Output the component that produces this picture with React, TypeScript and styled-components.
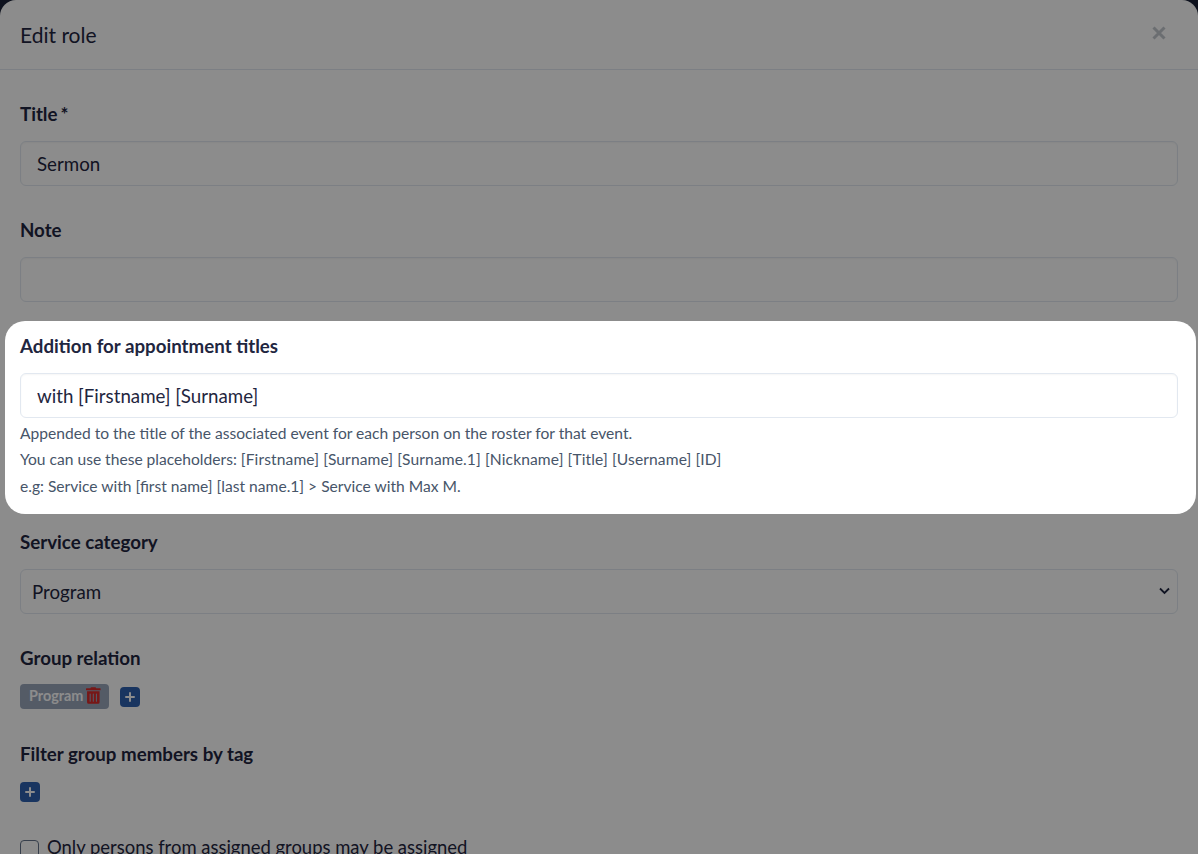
import React from "react";
import styled, { createGlobalStyle } from "styled-components";
import { FaTrashAlt } from "react-icons/fa";

const Global = createGlobalStyle`
  html, body { margin: 0; padding: 0; height: 854px; overflow: hidden; background: #1a2238; }
  body { font-family: Lato, "Liberation Sans", sans-serif; color: #1f2640; }
  * { box-sizing: border-box; }
`;

const Page = styled.div`
  position: relative;
  height: 854px;
  overflow: hidden;
  background: #1a2238;
`;

const Modal = styled.div`
  width: 1198px;
  height: 854px;
  background: #fff;
  border-radius: 16px 16px 0 0;
`;

const Header = styled.header`
  height: 70px;
  padding: 0 20px;
  display: flex;
  align-items: center;
  justify-content: space-between;
  border-bottom: 1px solid #e2e8f0;
`;

const Heading = styled.h2`
  margin: 0;
  font-size: 21px;
  font-weight: 400;
  line-height: 30px;
  color: #1f2640;
`;

const Close = styled.button`
  width: 16px;
  height: 16px;
  padding: 0;
  margin: -4px 11px 0 0;
  border: 0;
  background: none;
  color: #c4c8ce;
  display: flex;
`;

const Body = styled.div`
  padding: 31px 20px 0;
`;

const Field = styled.div`
  margin-bottom: 31px;
`;

const WideField = styled(Field)`
  margin-bottom: 32px;
`;

const Spotlight = styled.div`
  position: relative;
  z-index: 2;
  width: 1191px;
  margin: -12px -18px 15px -15px;
  padding: 12px 18px 14.8px 15px;
  background: #fff;
  border-radius: 20px;
  box-shadow: 0 0 0 2000px rgba(0, 0, 0, 0.45);
`;

const Label = styled.label`
  display: block;
  font-size: 18.72px;
  font-weight: 700;
  line-height: 27px;
  margin-bottom: 13px;
  color: #1f2640;
`;

const Input = styled.input`
  display: block;
  width: 1158px;
  height: 45px;
  padding: 0 16px;
  font: 400 18.72px/27px Lato, "Liberation Sans", sans-serif;
  color: #1f2640;
  background: #fff;
  border: 1px solid #e2e8f0;
  border-radius: 6px;
  outline: none;
  box-shadow: inset 0 1px 2px rgba(0, 0, 0, 0.04);
`;

const Help = styled.p`
  margin: 2px 0 0;
  font-size: 15.6px;
  line-height: 26.4px;
  color: #475569;
`;

const Placeholders = styled.span`
  letter-spacing: 0.11px;
`;

const Asterisk = styled.span`
  margin-left: -1.5px;
`;

const SelectWrap = styled.div`
  position: relative;
  width: 1158px;
  height: 45px;
`;

const Select = styled.select`
  appearance: none;
  display: block;
  width: 100%;
  height: 100%;
  padding: 0 11px;
  font: 400 18.72px Lato, "Liberation Sans", sans-serif;
  color: #1f2640;
  background: #fff;
  border: 1px solid #e2e8f0;
  border-radius: 6px;
`;

const Chevron = styled.svg`
  position: absolute;
  right: 8px;
  top: 18px;
  width: 11px;
  height: 8px;
  pointer-events: none;
`;

const ChipRow = styled.div`
  display: flex;
  align-items: center;
  gap: 11px;
  height: 25px;
  margin-top: -1px;
`;

const Chip = styled.span`
  display: inline-flex;
  align-items: center;
  gap: 3px;
  width: 89px;
  height: 25px;
  padding: 0 8px 2px 9px;
  background: #9aa6bb;
  border-radius: 4px;
  color: #fff;
  font-size: 14.4px;
  font-weight: 700;
`;

const Trash = styled(FaTrashAlt)`
  width: 15px;
  height: 17px;
  color: #d92b2b;
`;

const Plus = styled.button`
  width: 20px;
  height: 20px;
  padding: 0;
  border: 0;
  border-radius: 4px;
  background: #2f62b0;
  color: #fff;
  display: flex;
  align-items: center;
  justify-content: center;
`;

const TagPlus = styled(Plus)`
  margin-top: 14px;
`;

const CheckRow = styled.div`
  display: flex;
  align-items: flex-start;
  gap: 8px;
  font-size: 18.44px;
  line-height: 27px;
`;

const Box = styled.span`
  flex: none;
  width: 19px;
  height: 19px;
  margin-top: 6px;
  border: 1px solid #64748b;
  border-radius: 4px;
  background: #fff;
`;

const PlusIcon = () => (
  <svg width="10" height="10" viewBox="0 0 10 10" aria-hidden="true">
    <path d="M5 1v8M1 5h8" stroke="currentColor" strokeWidth="2" strokeLinecap="round" />
  </svg>
);

export default function App() {
  return (
    <Page>
      <Global />
      <Modal>
        <Header>
          <Heading>Edit role</Heading>
          <Close aria-label="Close">
            <svg width="16" height="16" viewBox="0 0 16 16" aria-hidden="true">
              <path d="M2.5 2.5l11 11M13.5 2.5l-11 11" stroke="currentColor" strokeWidth="3" />
            </svg>
          </Close>
        </Header>
        <Body>
          <Field>
            <Label>
              Title<Asterisk> *</Asterisk>
            </Label>
            <Input defaultValue="Sermon" />
          </Field>
          <Field>
            <Label>Note</Label>
            <Input />
          </Field>
          <Spotlight>
            <Label>Addition for appointment titles</Label>
            <Input defaultValue="with [Firstname] [Surname]" />
            <Help>
              Appended to the title of the associated event for each person on the roster for that event.
              <br />
              You can use these placeholders:{" "}
              <Placeholders>[Firstname] [Surname] [Surname.1] [Nickname] [Title] [Username] [ID]</Placeholders>
              <br />
              e.g: Service with [first name] [last name.1] &gt; Service with Max M.
            </Help>
          </Spotlight>
          <Field>
            <Label>Service category</Label>
            <SelectWrap>
              <Select defaultValue="Program">
                <option>Program</option>
              </Select>
              <Chevron viewBox="0 0 11 8" aria-hidden="true">
                <path d="M1 1.5l4.5 4.5L10 1.5" fill="none" stroke="#1f2640" strokeWidth="1.8" />
              </Chevron>
            </SelectWrap>
          </Field>
          <WideField>
            <Label>Group relation</Label>
            <ChipRow>
              <Chip>
                Program
                <Trash />
              </Chip>
              <Plus aria-label="Add group">
                <PlusIcon />
              </Plus>
            </ChipRow>
          </WideField>
          <WideField>
            <Label>Filter group members by tag</Label>
            <TagPlus aria-label="Add tag">
              <PlusIcon />
            </TagPlus>
          </WideField>
          <CheckRow>
            <Box />
            Only persons from assigned groups may be assigned
          </CheckRow>
        </Body>
      </Modal>
    </Page>
  );
}
